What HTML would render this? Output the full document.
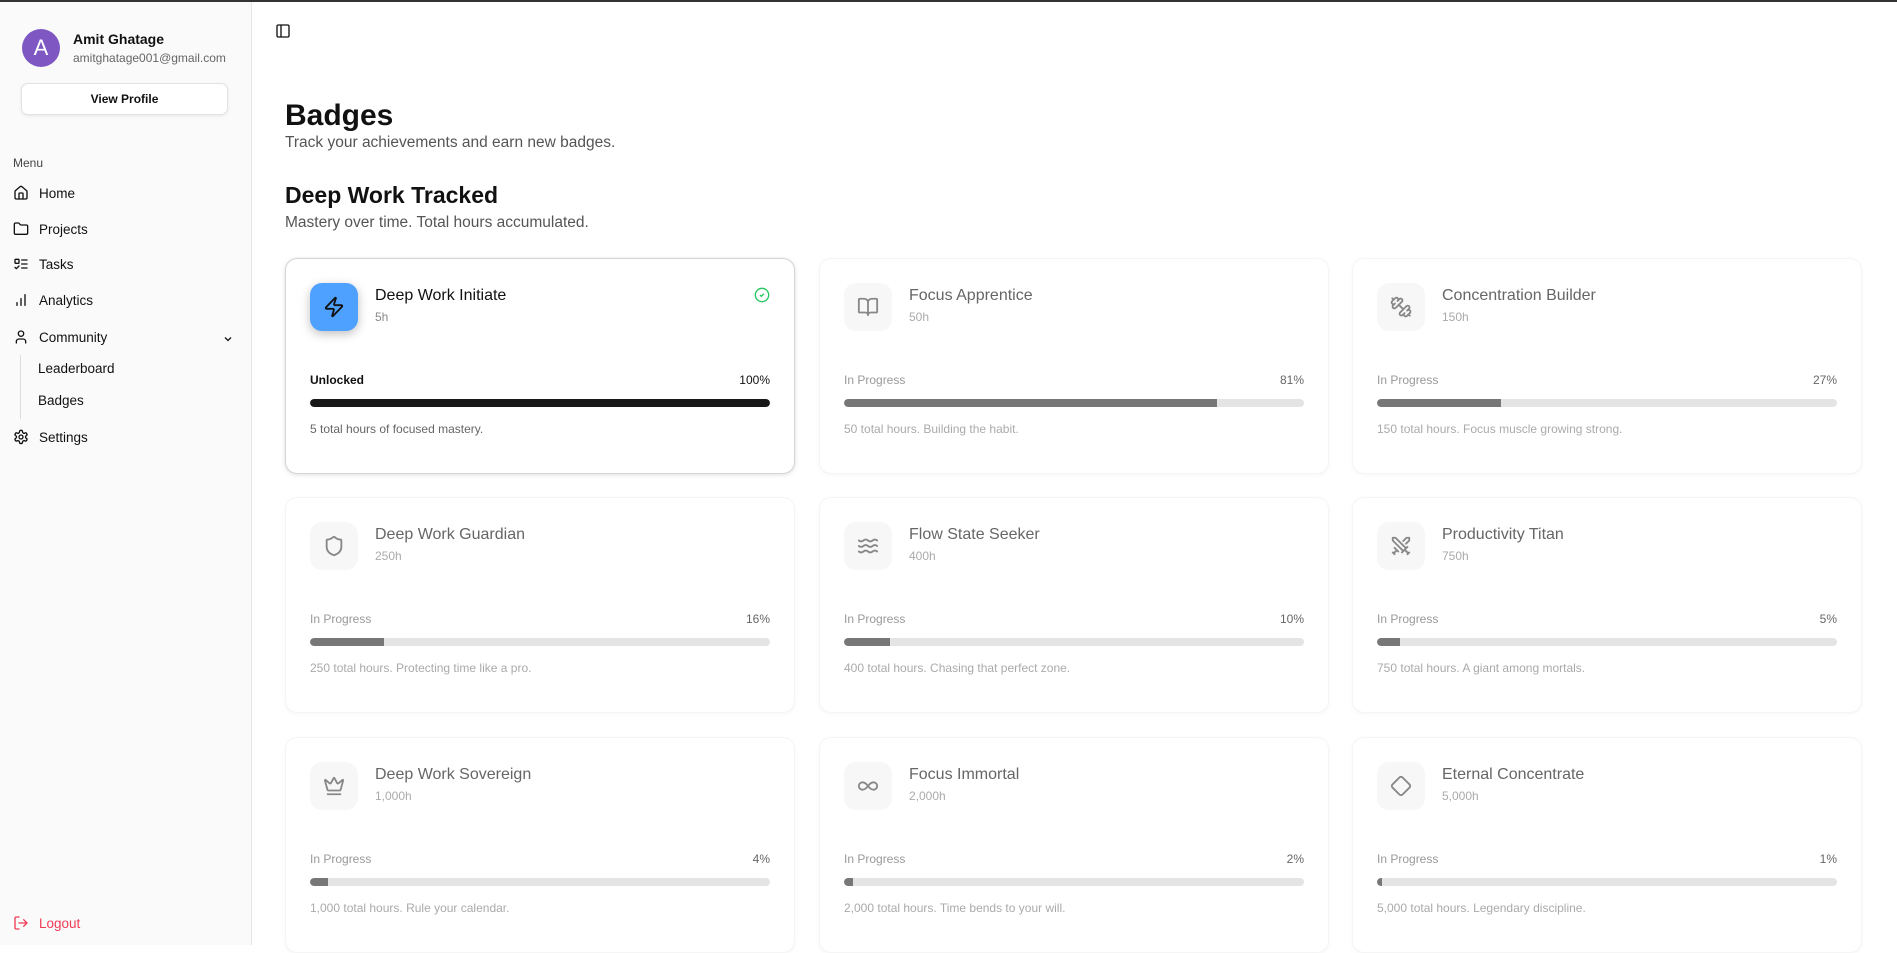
<!DOCTYPE html>
<html><head><meta charset="utf-8">
<style>
*{box-sizing:border-box;margin:0;padding:0}
body{width:1897px;height:945px;overflow:hidden;font-family:"Liberation Sans",sans-serif;background:#fff;color:#111;position:relative}
.topline{position:absolute;left:0;top:0;width:1897px;height:2px;background:#333}
.side{position:absolute;left:0;top:2px;width:252px;height:943px;background:#fafafa;border-right:1px solid #e5e5e5}
.av{position:absolute;left:22px;top:27px;width:38px;height:38px;border-radius:50%;background:#7e57c2;color:#fff;font-size:22px;text-align:center;line-height:38px}
.name{position:absolute;left:73px;top:29px;font-size:14px;font-weight:bold}
.mail{position:absolute;left:73px;top:49px;font-size:12px;color:#666}
.vp{position:absolute;left:21px;top:81px;width:207px;height:32px;border:1px solid #e3e3e3;border-radius:7px;background:#fff;box-shadow:0 1px 3px rgba(0,0,0,.08);font-size:12px;font-weight:bold;text-align:center;line-height:30px}
.menu{position:absolute;left:13px;top:154px;font-size:12px;color:#444}
.it{position:absolute;left:13px;font-size:13.5px;color:#111;display:flex;align-items:center;gap:10px}
.it svg{width:16px;height:16px;fill:none;stroke:#111;stroke-width:2;stroke-linecap:round;stroke-linejoin:round}
.sub{position:absolute;left:38px;font-size:13.5px}
.vline{position:absolute;left:20px;top:353px;width:1px;height:64px;background:#ddd}
h1{position:absolute;left:285px;top:99px;font-size:30px;font-weight:bold}
.p1{position:absolute;left:285px;top:134px;font-size:15.5px;color:#555}
h2{position:absolute;left:285px;top:182px;font-size:23px;font-weight:bold}
.p2{position:absolute;left:285px;top:214px;font-size:15.5px;color:#555}
.card{position:absolute;width:510px;height:216px;border-radius:12px;background:#fff;box-shadow:0 1px 4px rgba(0,0,0,.04);border:1px solid #f5f5f5}
.card.on{border:1px solid #d4d4d4;box-shadow:0 1px 5px rgba(0,0,0,.12)}
.ib{position:absolute;left:24px;top:24px;width:48px;height:48px;border-radius:12px;background:#f7f7f7;display:flex;align-items:center;justify-content:center}
.on .ib{background:#4ea1ff;box-shadow:0 3px 10px rgba(0,0,0,.25)}
.ib svg{width:22px;height:22px;fill:none;stroke:#888;stroke-width:2;stroke-linecap:round;stroke-linejoin:round}
.on .ib svg{stroke:#111}
.t{position:absolute;left:89px;top:28px;font-size:16px;color:#666}
.on .t{color:#111}
.h{position:absolute;left:89px;top:51px;font-size:12px;color:#aaa}
.on .h{color:#888}
.st{position:absolute;left:24px;top:114px;font-size:12px;color:#999}
.pc{position:absolute;right:24px;top:114px;font-size:12px;color:#666}
.on .st{color:#111;font-weight:bold}.on .pc{color:#111}
.bar{position:absolute;left:24px;right:24px;top:140px;height:8px;border-radius:4px;background:#e4e4e4;overflow:hidden}
.bar i{display:block;height:100%;background:#777;border-radius:4px 0 0 4px}
.on .bar i{background:#181818;border-radius:4px}
.d{position:absolute;left:24px;top:163px;font-size:12px;color:#aaa}
.on .d{color:#666}
.chk{position:absolute;right:24px;top:28px;width:16px;height:16px}
</style></head><body>
<div class="topline"></div>
<div class="side">
<div class="av">A</div>
<div class="name">Amit Ghatage</div>
<div class="mail">amitghatage001@gmail.com</div>
<div class="vp">View Profile</div>
<div class="menu">Menu</div>
<div class="it" style="top:183px"><svg viewBox="0 0 24 24"><path d="M15 21v-8a1 1 0 0 0-1-1h-4a1 1 0 0 0-1 1v8"/><path d="M3 10a2 2 0 0 1 .7-1.5l7-6a2 2 0 0 1 2.6 0l7 6A2 2 0 0 1 21 10v9a2 2 0 0 1-2 2H5a2 2 0 0 1-2-2z"/></svg>Home</div>
<div class="it" style="top:219px"><svg viewBox="0 0 24 24"><path d="M20 20a2 2 0 0 0 2-2V8a2 2 0 0 0-2-2h-7.9a2 2 0 0 1-1.7-.9l-.8-1.2A2 2 0 0 0 7.9 3H4a2 2 0 0 0-2 2v13a2 2 0 0 0 2 2Z"/></svg>Projects</div>
<div class="it" style="top:254px"><svg viewBox="0 0 24 24"><rect x="3" y="5" width="6" height="6" rx="1"/><path d="m3 17 2 2 4-4M13 6h8M13 12h8M13 18h8"/></svg>Tasks</div>
<div class="it" style="top:290px"><svg viewBox="0 0 24 24"><path d="M12 20V10M18 20V4M6 20v-4"/></svg>Analytics</div>
<div class="it" style="top:327px"><svg viewBox="0 0 24 24"><path d="M19 21v-2a4 4 0 0 0-4-4H9a4 4 0 0 0-4 4v2"/><circle cx="12" cy="7" r="4"/></svg>Community</div>
<svg style="position:absolute;left:222px;top:331px;width:12px;height:12px" viewBox="0 0 24 24" fill="none" stroke="#111" stroke-width="2.5"><path d="m6 9 6 6 6-6"/></svg>
<div class="vline"></div>
<div class="sub" style="top:359px">Leaderboard</div>
<div class="sub" style="top:391px">Badges</div>
<div class="it" style="top:427px"><svg viewBox="0 0 24 24"><circle cx="12" cy="12" r="3"/><path d="M12.2 2h-.4a2 2 0 0 0-2 2v.2a2 2 0 0 1-1 1.7l-.4.3a2 2 0 0 1-2 0l-.2-.1a2 2 0 0 0-2.7.7l-.2.4a2 2 0 0 0 .7 2.7l.2.1a2 2 0 0 1 1 1.7v.5a2 2 0 0 1-1 1.7l-.2.1a2 2 0 0 0-.7 2.7l.2.4a2 2 0 0 0 2.7.7l.2-.1a2 2 0 0 1 2 0l.4.3a2 2 0 0 1 1 1.7v.2a2 2 0 0 0 2 2h.4a2 2 0 0 0 2-2v-.2a2 2 0 0 1 1-1.7l.4-.3a2 2 0 0 1 2 0l.2.1a2 2 0 0 0 2.7-.7l.2-.4a2 2 0 0 0-.7-2.7l-.2-.1a2 2 0 0 1-1-1.7v-.5a2 2 0 0 1 1-1.7l.2-.1a2 2 0 0 0 .7-2.7l-.2-.4a2 2 0 0 0-2.7-.7l-.2.1a2 2 0 0 1-2 0l-.4-.3a2 2 0 0 1-1-1.7V4a2 2 0 0 0-2-2z"/></svg>Settings</div>
<div class="it" style="top:913px;color:#ef3b55"><svg viewBox="0 0 24 24" style="stroke:#ef3b55"><path d="M9 21H5a2 2 0 0 1-2-2V5a2 2 0 0 1 2-2h4M16 17l5-5-5-5M21 12H9"/></svg>Logout</div>
</div>
<svg style="position:absolute;left:275px;top:23px;width:16px;height:16px" viewBox="0 0 24 24" fill="none" stroke="#111" stroke-width="2"><rect x="3" y="3" width="18" height="18" rx="2"/><path d="M9 3v18"/></svg>
<h1>Badges</h1>
<div class="p1">Track your achievements and earn new badges.</div>
<h2>Deep Work Tracked</h2>
<div class="p2">Mastery over time. Total hours accumulated.</div>

<div class="card on" style="left:285px;top:258px"><div class="ib"><svg viewBox="0 0 24 24"><path d="M4 14a1 1 0 0 1-.8-1.6l9.9-10.2a.5.5 0 0 1 .9.5l-1.9 6a1 1 0 0 0 .9 1.3h7a1 1 0 0 1 .8 1.6l-9.9 10.2a.5.5 0 0 1-.9-.5l1.9-6a1 1 0 0 0-.9-1.3z"/></svg></div><div class="t">Deep Work Initiate</div><div class="h">5h</div>
<svg class="chk" viewBox="0 0 24 24" fill="none" stroke="#22c55e" stroke-width="2"><circle cx="12" cy="12" r="10"/><path d="m9 12 2 2 4-4"/></svg>
<div class="st">Unlocked</div><div class="pc">100%</div><div class="bar"><i style="width:100%"></i></div><div class="d">5 total hours of focused mastery.</div></div>

<div class="card" style="left:819px;top:258px"><div class="ib"><svg viewBox="0 0 24 24"><path d="M12 7v14M3 18a1 1 0 0 1-1-1V4a1 1 0 0 1 1-1h5a4 4 0 0 1 4 4 4 4 0 0 1 4-4h5a1 1 0 0 1 1 1v13a1 1 0 0 1-1 1h-6a3 3 0 0 0-3 3 3 3 0 0 0-3-3z"/></svg></div><div class="t">Focus Apprentice</div><div class="h">50h</div>
<div class="st">In Progress</div><div class="pc">81%</div><div class="bar"><i style="width:81%"></i></div><div class="d">50 total hours. Building the habit.</div></div>

<div class="card" style="left:1352px;top:258px"><div class="ib"><svg viewBox="0 0 24 24"><path d="M14.4 14.4 9.6 9.6M18.7 21.5a2 2 0 1 1-2.8-2.8l-1.8 1.8a2 2 0 1 1-2.8-2.8l6.4-6.4a2 2 0 1 1 2.8 2.8l-1.8 1.8a2 2 0 1 1 2.8 2.8zM21.5 21.5l-1.4-1.4M3.9 3.9 2.5 2.5M6.4 12.8a2 2 0 1 1-2.8-2.8l1.8-1.8a2 2 0 1 1-2.8-2.8l2.8-2.8a2 2 0 1 1 2.8 2.8l1.8-1.8a2 2 0 1 1 2.8 2.8z"/></svg></div><div class="t">Concentration Builder</div><div class="h">150h</div>
<div class="st">In Progress</div><div class="pc">27%</div><div class="bar"><i style="width:27%"></i></div><div class="d">150 total hours. Focus muscle growing strong.</div></div>

<div class="card" style="left:285px;top:497px"><div class="ib"><svg viewBox="0 0 24 24"><path d="M20 13c0 5-3.5 7.5-7.7 9a1 1 0 0 1-.7 0C7.5 20.5 4 18 4 13V6a1 1 0 0 1 1-1c2 0 4.5-1.2 6.2-2.7a1.2 1.2 0 0 1 1.5 0C14.5 3.8 17 5 19 5a1 1 0 0 1 1 1z"/></svg></div><div class="t">Deep Work Guardian</div><div class="h">250h</div>
<div class="st">In Progress</div><div class="pc">16%</div><div class="bar"><i style="width:16%"></i></div><div class="d">250 total hours. Protecting time like a pro.</div></div>

<div class="card" style="left:819px;top:497px"><div class="ib"><svg viewBox="0 0 24 24"><path d="M2 6c.6.5 1.2 1 2.5 1C7 7 7 5 9.5 5c2.6 0 2.4 2 5 2 2.5 0 2.5-2 5-2 1.3 0 1.9.5 2.5 1M2 12c.6.5 1.2 1 2.5 1 2.5 0 2.5-2 5-2 2.6 0 2.4 2 5 2 2.5 0 2.5-2 5-2 1.3 0 1.9.5 2.5 1M2 18c.6.5 1.2 1 2.5 1 2.5 0 2.5-2 5-2 2.6 0 2.4 2 5 2 2.5 0 2.5-2 5-2 1.3 0 1.9.5 2.5 1"/></svg></div><div class="t">Flow State Seeker</div><div class="h">400h</div>
<div class="st">In Progress</div><div class="pc">10%</div><div class="bar"><i style="width:10%"></i></div><div class="d">400 total hours. Chasing that perfect zone.</div></div>

<div class="card" style="left:1352px;top:497px"><div class="ib"><svg viewBox="0 0 24 24"><path d="M14.5 17.5 3 6V3h3l11.5 11.5M13 19l6-6M16 16l4 4M19 21l2-2M14.5 6.5 18 3h3v3l-3.5 3.5M5 14l4 4M7 17l-3 3M3 19l2 2"/></svg></div><div class="t">Productivity Titan</div><div class="h">750h</div>
<div class="st">In Progress</div><div class="pc">5%</div><div class="bar"><i style="width:5%"></i></div><div class="d">750 total hours. A giant among mortals.</div></div>

<div class="card" style="left:285px;top:737px"><div class="ib"><svg viewBox="0 0 24 24"><path d="M11.6 3.3a.5.5 0 0 1 .9 0l2.9 5.5a1 1 0 0 0 1.5.3l4.3-3.7a.5.5 0 0 1 .8.5l-2.8 10.3a1 1 0 0 1-1 .7H5.9a1 1 0 0 1-1-.7L2.1 5.9a.5.5 0 0 1 .8-.5l4.3 3.7a1 1 0 0 0 1.5-.3zM5 21h14"/></svg></div><div class="t">Deep Work Sovereign</div><div class="h">1,000h</div>
<div class="st">In Progress</div><div class="pc">4%</div><div class="bar"><i style="width:4%"></i></div><div class="d">1,000 total hours. Rule your calendar.</div></div>

<div class="card" style="left:819px;top:737px"><div class="ib"><svg viewBox="0 0 24 24"><path d="M12 12c-2-2.7-4-4-6-4a4 4 0 0 0 0 8c2 0 4-1.3 6-4Zm0 0c2 2.7 4 4 6 4a4 4 0 0 0 0-8c-2 0-4 1.3-6 4Z"/></svg></div><div class="t">Focus Immortal</div><div class="h">2,000h</div>
<div class="st">In Progress</div><div class="pc">2%</div><div class="bar"><i style="width:2%"></i></div><div class="d">2,000 total hours. Time bends to your will.</div></div>

<div class="card" style="left:1352px;top:737px"><div class="ib"><svg viewBox="0 0 24 24"><path d="M2.7 10.3a2.4 2.4 0 0 0 0 3.4l7.6 7.6a2.4 2.4 0 0 0 3.4 0l7.6-7.6a2.4 2.4 0 0 0 0-3.4l-7.6-7.6a2.4 2.4 0 0 0-3.4 0z"/></svg></div><div class="t">Eternal Concentrate</div><div class="h">5,000h</div>
<div class="st">In Progress</div><div class="pc">1%</div><div class="bar"><i style="width:1%"></i></div><div class="d">5,000 total hours. Legendary discipline.</div></div>
</body></html>
